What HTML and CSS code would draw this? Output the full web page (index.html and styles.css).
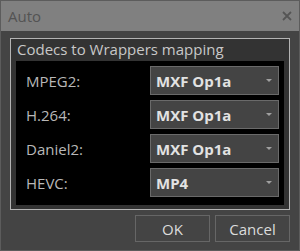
FILE: index.html
```html
<!DOCTYPE html>
<html lang="en">
<head>
    <meta charset="UTF-8">
    <meta name="viewport" content="width=device-width, initial-scale=1.0">
    <title>Auto</title>
    <link rel="stylesheet" href="styles.css">
</head>
<body>
    <div class="window">
        <div class="titlebar">
            <span class="title">Auto</span>
            <svg class="close" width="10" height="10" viewBox="0 0 10 10">
                <path d="M1 1 L9 9 M9 1 L1 9" stroke="#555" stroke-width="1.8" fill="none"/>
            </svg>
        </div>

        <div class="content">
            <div class="group">
                <div class="group-title">Codecs to Wrappers mapping</div>
                <div class="group-body">
                    <span class="label">MPEG2:</span>
                    <div class="select">MXF Op1a<span class="arrow"></span></div>

                    <span class="label">H.264:</span>
                    <div class="select">MXF Op1a<span class="arrow"></span></div>

                    <span class="label">Daniel2:</span>
                    <div class="select">MXF Op1a<span class="arrow"></span></div>

                    <span class="label">HEVC:</span>
                    <div class="select">MP4<span class="arrow"></span></div>
                </div>
            </div>

            <div class="buttons">
                <button class="btn">OK</button>
                <button class="btn">Cancel</button>
            </div>
        </div>
    </div>
</body>
</html>
```

FILE: styles.css
```css
body {
    margin: 0;
    padding: 0;
    font-family: "Open Sans", "Noto Sans", sans-serif;
    font-size: 15px;
    background-color: #444444;
}

.window {
    width: 300px;
    height: 251px;
    box-sizing: border-box;
    border: 1px solid #5c5c5c;
    background-color: #444444;
}

.titlebar {
    height: 30px;
    background-color: #808080;
    display: flex;
    align-items: center;
    justify-content: space-between;
    padding: 0 7px 0 7px;
}

.title {
    color: #535353;
    font-size: 15px;
}

.close {
    display: block;
}

.content {
    padding: 7px 9px 0 9px;
}

.group {
    border: 1px solid #b4b4b4;
    background-color: #333333;
    padding: 0 5px 4px 5px;
}

.group-title {
    height: 22px;
    line-height: 21px;
    color: #c8c8c8;
    padding-left: 1px;
}

.group-body {
    background-color: #000000;
    display: grid;
    grid-template-columns: 124px 129px;
    row-gap: 5px;
    align-items: center;
    padding: 5px 0 8px 10px;
}

.label {
    color: #b8b8b8;
}

.select {
    height: 29px;
    box-sizing: border-box;
    border: 1px solid #6a6a6a;
    background-color: #444444;
    color: #e2e2e2;
    font-weight: bold;
    display: flex;
    align-items: center;
    justify-content: space-between;
    padding: 0 6px 0 5px;
}

.arrow {
    width: 0;
    height: 0;
    border-left: 3px solid transparent;
    border-right: 3px solid transparent;
    border-top: 3px solid #a0a0a0;
}

.buttons {
    display: flex;
    justify-content: flex-end;
    gap: 5px;
    margin-top: 5px;
}

.btn {
    width: 75px;
    height: 27px;
    border: 1px solid #666666;
    background-color: #444444;
    color: #dcdcdc;
    font-family: "Open Sans", "Noto Sans", sans-serif;
    font-size: 15px;
    padding: 0;
}
```
